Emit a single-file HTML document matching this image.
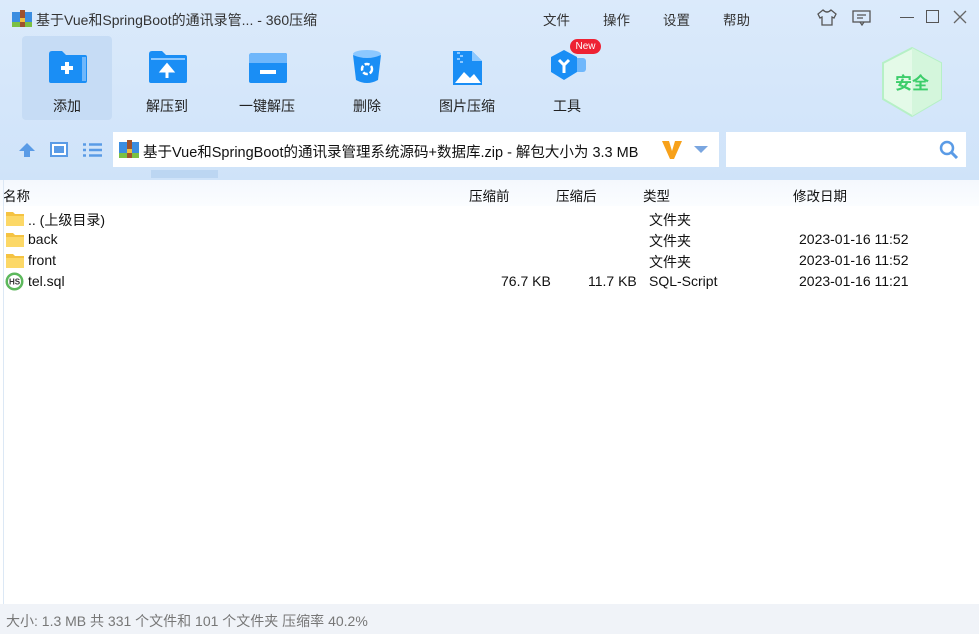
<!DOCTYPE html>
<html><head><meta charset="utf-8"><style>
*{margin:0;padding:0;box-sizing:border-box}
body{width:979px;height:634px;overflow:hidden;background:#fff;font-family:"Liberation Sans","Noto Sans CJK SC",sans-serif;font-size:14px;color:#111;position:relative}
.top{position:absolute;left:0;top:0;width:979px;height:180px;background:linear-gradient(#dbeafb,#cfe3f9)}
.abs{position:absolute;white-space:nowrap}
.menu{top:9px;font-size:13.5px;color:#333}
.tb{position:absolute;top:36px;width:90px;height:84px;text-align:center;font-size:14px;color:#222}
.tb .lbl{position:absolute;top:60px;left:0;width:100%}
.tb svg{position:absolute;left:26px;top:14px}
.row{position:absolute;left:0;width:979px;height:21px;font-size:14px}
.row span{position:absolute;top:2px;white-space:nowrap}
.hdr span{position:absolute;top:185px;font-size:13.5px}
</style></head><body>
<div class="top"></div>
<svg class="abs" style="left:12px;top:10px" width="20" height="17"><rect x="0" y="2" width="20" height="15" fill="#3b8de0"/><rect x="0" y="12" width="20" height="5" fill="#7bc043"/><rect x="8" y="0" width="5" height="17" fill="#a0522d"/><rect x="8" y="8" width="5" height="4" fill="#f0c040"/></svg>
<div class="abs" style="left:36px;top:10px;font-size:14px;color:#333">基于Vue和SpringBoot的通讯录管... - 360压缩</div>
<div class="abs menu" style="left:543px">文件</div>
<div class="abs menu" style="left:603px">操作</div>
<div class="abs menu" style="left:663px">设置</div>
<div class="abs menu" style="left:723px">帮助</div>
<svg class="abs" style="left:817px;top:9px" width="20" height="17"><path d="M6 1 L1 5 L3 9 L5 8 V16 H15 V8 L17 9 L19 5 L14 1 Q10 5 6 1Z" fill="none" stroke="#555" stroke-width="1.3"/></svg>
<svg class="abs" style="left:852px;top:10px" width="20" height="16"><rect x="1" y="1" width="17" height="11" fill="none" stroke="#555" stroke-width="1.3"/><path d="M5 5H14M5 8H11M8 12L10 15L12 12" fill="none" stroke="#555" stroke-width="1.3"/></svg>
<div class="abs" style="left:900px;top:17px;width:14px;height:1.3px;background:#555"></div>
<div class="abs" style="left:926px;top:10px;width:13px;height:13px;border:1.5px solid #555"></div>
<svg class="abs" style="left:953px;top:10px" width="14" height="14"><path d="M1 1L13 13M13 1L1 13" stroke="#666" stroke-width="1.3"/></svg>
<div class="tb" style="left:22px;background:#c6dcf5;border-radius:4px"><svg width="40" height="34"><path d="M1 4 Q1 1 4 1 H14 L18 5 H37 Q39 5 39 7 V31 Q39 33 37 33 H3 Q1 33 1 31Z" fill="#1a8ef5"/><rect x="34" y="7" width="4" height="24" fill="#6fb7fb"/><path d="M19 12V24M13 18H25" stroke="#fff" stroke-width="4"/></svg><div class="lbl">添加</div></div>
<div class="tb" style="left:122px"><svg width="40" height="34"><path d="M1 4 Q1 1 4 1 H14 L18 5 H37 Q39 5 39 7 V31 Q39 33 37 33 H3 Q1 33 1 31Z" fill="#1a8ef5"/><rect x="3" y="8" width="34" height="2" fill="#8cc8ff"/><path d="M19 28V19M14 21L19 15L24 21Z" fill="#fff" stroke="#fff" stroke-width="3"/></svg><div class="lbl">解压到</div></div>
<div class="tb" style="left:222px"><svg width="40" height="34"><path d="M1 6 Q1 3 4 3 H37 Q39 3 39 5 V31 Q39 33 37 33 H3 Q1 33 1 31Z" fill="#1a8ef5"/><path d="M1 6 Q1 3 4 3 H37 Q39 3 39 5 V13 H1Z" fill="#6fb7fb"/><rect x="12" y="20" width="16" height="4" fill="#fff"/></svg><div class="lbl">一键解压</div></div>
<div class="tb" style="left:322px"><svg width="40" height="34" style="left:30px"><ellipse cx="15" cy="4" rx="14" ry="4" fill="#8cc8ff"/><path d="M1 5 L4 30 Q15 36 26 30 L29 5 Q15 11 1 5Z" fill="#1a8ef5"/><circle cx="15" cy="19" r="5" fill="none" stroke="#fff" stroke-width="2.5" stroke-dasharray="5 2"/></svg><div class="lbl">删除</div></div>
<div class="tb" style="left:422px"><svg width="40" height="36" style="left:30px"><path d="M1 1 H20 L30 11 V35 H1Z" fill="#1a8ef5"/><path d="M20 1 V11 H30Z" fill="#8cc8ff"/><path d="M5 3H8M8 6H11M5 9H8M8 12H11" stroke="#8cc8ff" stroke-width="2"/><path d="M3 33 L12 22 L18 28 L22 24 L29 33Z" fill="#fff"/></svg><div class="lbl">图片压缩</div></div>
<div class="tb" style="left:522px"><svg width="50" height="36" style="left:26px;top:12px"><rect x="26" y="10" width="12" height="14" rx="3" fill="#6fb7fb"/><path d="M16 2 L29 9 V24 L16 32 L3 24 V9Z" fill="#1a8ef5"/><path d="M11 12 L16 17 L21 12 M16 17 V25" stroke="#fff" stroke-width="3" fill="none"/></svg><div style="position:absolute;left:48px;top:3px;width:31px;height:15px;background:#ee2233;border-radius:8px;color:#fff;font-size:10px;line-height:15px;text-align:center">New</div><div class="lbl">工具</div></div>
<svg class="abs" style="left:880px;top:46px" width="64" height="74"><path d="M32 2 L61 17 V53 L32 70 L3 53 V17Z" fill="#e4fae8" stroke="#b6f0c6" stroke-width="2"/><path d="M32 2 L61 17 V53 L32 70Z" fill="#d4f6dc"/><text x="32" y="43" font-size="17" font-weight="bold" text-anchor="middle" fill="#3ccd6a" font-family="Noto Sans CJK SC,sans-serif">安全</text></svg>
<svg class="abs" style="left:18px;top:142px" width="18" height="16"><path d="M9 1 L17 9 H12 V15 H6 V9 H1Z" fill="#5a9be6"/></svg>
<div class="abs" style="left:50px;top:142px;width:18px;height:15px;border:2px solid #5a9be6;background:#fff"><div style="margin:2px;height:7px;background:#5a9be6"></div></div>
<svg class="abs" style="left:83px;top:143px" width="19" height="14"><path d="M0 1.5H3M6 1.5H19M0 7H3M6 7H19M0 12.5H3M6 12.5H19" stroke="#5a9be6" stroke-width="2.5"/></svg>
<div class="abs" style="left:113px;top:132px;width:606px;height:35px;background:#fff"></div>
<svg class="abs" style="left:119px;top:140px" width="20" height="18"><rect x="0" y="2" width="20" height="16" fill="#3b8de0"/><rect x="0" y="13" width="20" height="5" fill="#7bc043"/><rect x="8" y="0" width="5" height="18" fill="#a0522d"/><rect x="8" y="9" width="5" height="4" fill="#f0c040"/></svg>
<div class="abs" style="left:143px;top:141px;font-size:14.5px;color:#111">基于Vue和SpringBoot的通讯录管理系统源码+数据库.zip - 解包大小为 3.3 MB</div>
<svg class="abs" style="left:661px;top:140px" width="22" height="20"><path d="M1 1 L8 1 L11 11 L14 1 L21 1 L13 19 H9Z" fill="#f7a11a"/></svg>
<svg class="abs" style="left:694px;top:146px" width="14" height="8"><path d="M0 0H14L7 7Z" fill="#7aa6e0"/></svg>
<div class="abs" style="left:726px;top:132px;width:240px;height:35px;background:#fff"></div>
<svg class="abs" style="left:939px;top:140px" width="20" height="19"><circle cx="8" cy="8" r="6" fill="none" stroke="#5a9be6" stroke-width="2.5"/><path d="M12 12L18 18" stroke="#5a9be6" stroke-width="3"/></svg>
<div class="abs" style="left:151px;top:170px;width:67px;height:8px;background:#bcd6f2"></div>
<div class="abs" style="left:0;top:180px;width:979px;height:26px;background:linear-gradient(#f4f8fd,#fbfdff)"></div>
<div class="hdr"><span class="abs" style="left:3px">名称</span><span class="abs" style="left:469px">压缩前</span><span class="abs" style="left:556px">压缩后</span><span class="abs" style="left:643px">类型</span><span class="abs" style="left:793px">修改日期</span></div>
<div class="abs" style="left:3px;top:180px;width:1px;height:424px;background:#dce8f5"></div>
<div class="row" style="top:208px"><svg class="abs" style="left:6px;top:3px" width="18" height="15"><path d="M0 1H7L9 3H18V15H0Z" fill="#f5c342"/><rect x="0" y="5" width="18" height="10" fill="#fcd867"/></svg><span style="left:28px">.. (上级目录)</span><span style="left:649px">文件夹</span></div>
<div class="row" style="top:229px"><svg class="abs" style="left:6px;top:3px" width="18" height="15"><path d="M0 1H7L9 3H18V15H0Z" fill="#f5c342"/><rect x="0" y="5" width="18" height="10" fill="#fcd867"/></svg><span style="left:28px">back</span><span style="left:649px">文件夹</span><span style="left:799px">2023-01-16 11:52</span></div>
<div class="row" style="top:250px"><svg class="abs" style="left:6px;top:3px" width="18" height="15"><path d="M0 1H7L9 3H18V15H0Z" fill="#f5c342"/><rect x="0" y="5" width="18" height="10" fill="#fcd867"/></svg><span style="left:28px">front</span><span style="left:649px">文件夹</span><span style="left:799px">2023-01-16 11:52</span></div>
<div class="row" style="top:271px"><svg class="abs" style="left:5px;top:1px" width="19" height="19"><circle cx="9.5" cy="9.5" r="9" fill="#5cb85c"/><circle cx="9.5" cy="9.5" r="6.5" fill="#fff"/><text x="9.5" y="12.5" font-size="8" font-weight="bold" text-anchor="middle" fill="#333" font-family="Liberation Sans">HS</text></svg><span style="left:28px">tel.sql</span><span style="left:501px">76.7 KB</span><span style="left:588px">11.7 KB</span><span style="left:649px">SQL-Script</span><span style="left:799px">2023-01-16 11:21</span></div>
<div class="abs" style="left:0;top:604px;width:979px;height:30px;background:#f0f3f8"></div>
<div class="abs" style="left:6px;top:611px;font-size:14px;color:#777">大小: 1.3 MB 共 331 个文件和 101 个文件夹 压缩率 40.2%</div>
</body></html>
